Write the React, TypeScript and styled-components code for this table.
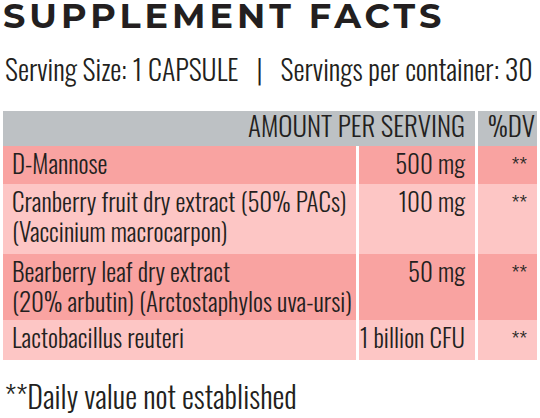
import React from "react";
import styled, { createGlobalStyle } from "styled-components";

const Global = createGlobalStyle`
  html, body { margin: 0; padding: 0; background: #ffffff; }
  body { width: 540px; height: 418px; overflow: hidden; }
`;

const NARROW = `Oswald, "Roboto Condensed", "Liberation Sans", sans-serif`;

const Page = styled.div`
  width: 540px;
  height: 418px;
  padding: 0 3px;
  box-sizing: border-box;
  display: flex;
  flex-direction: column;
  color: #231f20;
`;

const Title = styled.h1`
  margin: 0;
  font-family: Montserrat, Lato, "Open Sans", sans-serif;
  font-weight: 700;
  font-size: 35px;
  line-height: 32px;
  letter-spacing: 4px;
  color: #231f20;
  white-space: nowrap;
`;

const Serving = styled.div`
  margin-top: 21px;
  padding-left: 2px;
  display: flex;
  align-items: baseline;
  font-family: ${NARROW};
  font-weight: 300;
  font-size: 28px;
  line-height: 32px;
  white-space: nowrap;
`;

const Pipe = styled.span`
  margin: 0 18px;
`;

const Table = styled.div`
  margin-top: 26px;
  display: grid;
  grid-template-columns: 353px 116px 59px;
  column-gap: 3px;
  font-family: ${NARROW};
  font-weight: 300;
  font-size: 25px;
  line-height: 30px;
`;

const HeadCell = styled.div<{ $span?: number }>`
  grid-column: span ${(p) => p.$span ?? 1};
  background: #bdc1c4;
  height: 35px;
  padding: 0 10px;
  box-sizing: border-box;
  text-align: right;
  font-size: 27px;
  line-height: 28px;
  text-transform: uppercase;
  white-space: nowrap;
`;

const Cell = styled.div<{ $tone: "dark" | "light"; $align?: "left" | "right"; $h: number }>`
  background: ${(p) => (p.$tone === "dark" ? "#f9a3a1" : "#fdc6c5")};
  height: ${(p) => p.$h}px;
  box-sizing: border-box;
  padding: 2px ${(p) => (p.$align === "right" ? "10px" : "0")} 0
    ${(p) => (p.$align === "right" ? "0" : "9px")};
  text-align: ${(p) => p.$align ?? "left"};
  white-space: nowrap;
`;

const Stars = styled.span`
  font-size: 21px;
`;

const Footnote = styled.div`
  margin-top: 20px;
  padding-left: 2px;
  font-family: ${NARROW};
  font-weight: 300;
  font-size: 30px;
  line-height: 32px;
  white-space: nowrap;
`;

type Row = { name: React.ReactNode; amount: string; tone: "dark" | "light"; h: number };

const rows: Row[] = [
  { name: "D-Mannose", amount: "500 mg", tone: "dark", h: 38 },
  {
    name: (
      <>
        Cranberry fruit dry extract (50% PACs)
        <br />
        (Vaccinium macrocarpon)
      </>
    ),
    amount: "100 mg",
    tone: "light",
    h: 70,
  },
  {
    name: (
      <>
        Bearberry leaf dry extract
        <br />
        (20% arbutin) (Arctostaphylos uva-ursi)
      </>
    ),
    amount: "50 mg",
    tone: "dark",
    h: 66,
  },
  { name: "Lactobacillus reuteri", amount: "1 billion CFU", tone: "light", h: 40 },
];

export default function App() {
  return (
    <>
      <Global />
      <Page>
        <Title>SUPPLEMENT FACTS</Title>
        <Serving>
          <span>Serving Size: 1 CAPSULE</span>
          <Pipe>|</Pipe>
          <span>Servings per container: 30</span>
        </Serving>
        <Table>
          <HeadCell $span={2}>Amount per serving</HeadCell>
          <HeadCell>%DV</HeadCell>
          {rows.map((r, i) => (
            <React.Fragment key={i}>
              <Cell $tone={r.tone} $h={r.h}>{r.name}</Cell>
              <Cell $tone={r.tone} $h={r.h} $align="right">{r.amount}</Cell>
              <Cell $tone={r.tone} $h={r.h} $align="right"><Stars>**</Stars></Cell>
            </React.Fragment>
          ))}
        </Table>
        <Footnote>**Daily value not established</Footnote>
      </Page>
    </>
  );
}
